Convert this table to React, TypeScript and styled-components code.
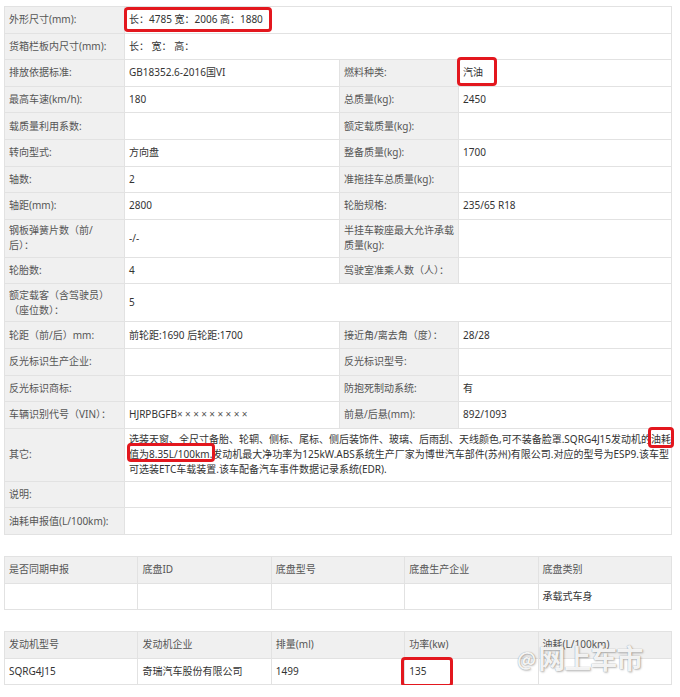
import React from 'react'
import styled, { createGlobalStyle } from 'styled-components'

const GlobalStyle = createGlobalStyle`
  body {
    margin: 0;
    background: #fff;
    font-family: "Noto Sans", "Noto Sans CJK SC", sans-serif;
  }
`

const Page = styled.div`
  position: relative;
  padding: 6px 8px 0 4px;
`

const Sheet = styled.div<{ $cols: string }>`
  display: grid;
  grid-template-columns: ${p => p.$cols};
  gap: 1px;
  padding: 1px;
  background: #e2e2e2;
  & + & {
    margin-top: 21px;
  }
`

const CellBox = styled.div<{ $label?: boolean; $span: number }>`
  grid-column: span ${p => p.$span};
  display: flex;
  align-items: center;
  box-sizing: border-box;
  min-height: 25.6px;
  padding: 3.5px 4px;
  background: ${p => (p.$label ? '#f0f0f0' : '#fff')};
  color: ${p => (p.$label ? '#555' : '#333')};
  font-size: 10px;
  line-height: 15px;
  white-space: nowrap;
`

const Mark = styled.span<{ $inset: string }>`
  position: relative;
  display: inline-block;
  &::after {
    content: '';
    position: absolute;
    inset: ${p => p.$inset};
    border: 3px solid #e3171e;
    border-radius: 4px;
  }
`

const Cross = styled.span`
  letter-spacing: 2.4px;
  color: #555;
`

const Watermark = styled.div`
  position: absolute;
  left: 517px;
  top: 641px;
  display: flex;
  align-items: center;
  font-family: "Noto Sans CJK SC", sans-serif;
  font-weight: 700;
  font-size: 27px;
  line-height: 34px;
  letter-spacing: -1px;
  color: rgba(255, 255, 255, 0.92);
  text-shadow: 0 0 1px rgba(0, 0, 0, 0.4), 1px 1px 2px rgba(0, 0, 0, 0.25);
  span {
    font-size: 19px;
    margin-right: 3px;
  }
`

interface CellProps {
  label?: boolean
  span?: number
  children?: React.ReactNode
}

const Cell = ({ label, span = 1, children }: CellProps) => (
  <CellBox $label={label} $span={span}>
    <div>{children}</div>
  </CellBox>
)

type Row = [React.ReactNode, React.ReactNode, React.ReactNode?, React.ReactNode?]

const rows: Row[] = [
  ['外形尺寸(mm):', <Mark $inset="-5px -9px -5px -5px">长：4785 宽：2006 高：1880</Mark>],
  ['货箱栏板内尺寸(mm):', '长： 宽： 高：'],
  ['排放依据标准:', 'GB18352.6-2016国VI', '燃料种类:', <Mark $inset="-8px -14px -6px -6px">汽油</Mark>],
  ['最高车速(km/h):', '180', '总质量(kg):', '2450'],
  ['载质量利用系数:', '', '额定载质量(kg):', ''],
  ['转向型式:', '方向盘', '整备质量(kg):', '1700'],
  ['轴数:', '2', '准拖挂车总质量(kg):', ''],
  ['轴距(mm):', '2800', '轮胎规格:', '235/65 R18'],
  [
    <>钢板弹簧片数（前/<br />后）：</>,
    '-/-',
    <>半挂车鞍座最大允许承载<br />质量(kg):</>,
    '',
  ],
  ['轮胎数:', '4', '驾驶室准乘人数（人）：', ''],
  [<>额定载客（含驾驶员）<br />（座位数）：</>, '5'],
  ['轮距（前/后）mm:', '前轮距:1690 后轮距:1700', '接近角/离去角（度）：', '28/28'],
  ['反光标识生产企业:', '', '反光标识型号:', ''],
  ['反光标识商标:', '', '防抱死制动系统:', '有'],
  ['车辆识别代号（VIN）：', <>HJRPBGFB<Cross>×××××××××</Cross></>, '前悬/后悬(mm):', '892/1093'],
  [
    '其它:',
    <>
      选装天窗、全尺寸备胎、轮辋、侧标、尾标、侧后装饰件、玻璃、后雨刮、天线颜色,可不装备脸罩.SQRG4J15发动机的
      <Mark $inset="-5px -3px -1px -3px">油耗</Mark>
      <br />
      <Mark $inset="-4px -5px 0 -2px">值为8.35L/100km</Mark>
      .发动机最大净功率为125kW.ABS系统生产厂家为博世汽车部件(苏州)有限公司.对应的型号为ESP9.该车型
      <br />
      可选装ETC车载装置.该车配备汽车事件数据记录系统(EDR).
    </>,
  ],
  ['说明:', ''],
  ['油耗申报值(L/100km):', ''],
]

const chassisHead = ['是否同期申报', '底盘ID', '底盘型号', '底盘生产企业', '底盘类别']
const chassisBody = ['', '', '', '', '承载式车身']

const engineHead = ['发动机型号', '发动机企业', '排量(ml)', '功率(kw)', '油耗(L/100km)']
const engineBody: React.ReactNode[] = [
  'SQRG4J15',
  '奇瑞汽车股份有限公司',
  '1499',
  <Mark $inset="-7px -27px -8px -8px">135</Mark>,
  '',
]

export default function App() {
  return (
    <Page>
      <GlobalStyle />
      <Sheet $cols="119px 214px 118px 212px">
        {rows.map((r, i) =>
          r.length > 2 ? (
            <React.Fragment key={i}>
              <Cell label>{r[0]}</Cell>
              <Cell>{r[1]}</Cell>
              <Cell label>{r[2]}</Cell>
              <Cell>{r[3]}</Cell>
            </React.Fragment>
          ) : (
            <React.Fragment key={i}>
              <Cell label>{r[0]}</Cell>
              <Cell span={3}>{r[1]}</Cell>
            </React.Fragment>
          )
        )}
      </Sheet>
      <Sheet $cols="repeat(5, 1fr)">
        {chassisHead.map(h => (
          <Cell label key={h}>{h}</Cell>
        ))}
        {chassisBody.map((v, i) => (
          <Cell key={i}>{v}</Cell>
        ))}
      </Sheet>
      <Sheet $cols="repeat(5, 1fr)">
        {engineHead.map(h => (
          <Cell label key={h}>{h}</Cell>
        ))}
        {engineBody.map((v, i) => (
          <Cell key={i}>{v}</Cell>
        ))}
      </Sheet>
      <Watermark>
        <span>@</span>网上车市
      </Watermark>
    </Page>
  )
}
